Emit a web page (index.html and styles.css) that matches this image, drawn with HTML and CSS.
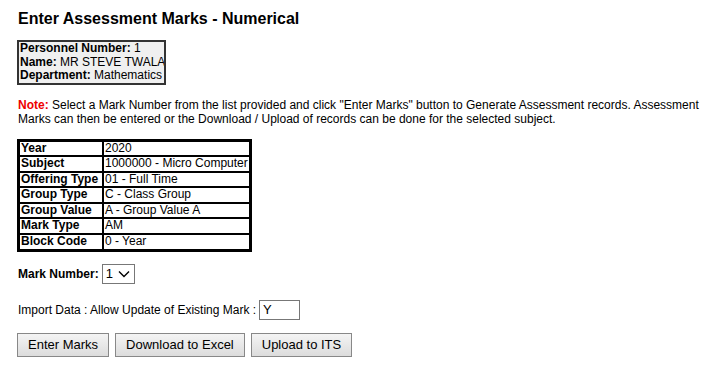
FILE: index.html
```html
<!DOCTYPE html>
<html>
<head>
<meta charset="utf-8">
<link rel="stylesheet" href="styles.css">
</head>
<body>
<div class="page">
  <h1 class="title">Enter Assessment Marks - Numerical</h1>
  <div class="person">
    <div><b>Personnel Number:</b> 1</div>
    <div><b>Name:</b> MR STEVE TWALA</div>
    <div><b>Department:</b> Mathematics</div>
  </div>
  <p class="note"><b class="note-label">Note:</b> Select a Mark Number from the list provided and click "Enter Marks" button to Generate Assessment records. Assessment Marks can then be entered or the Download / Upload of records can be done for the selected subject.</p>
  <table class="info">
    <tr><th>Year</th><td>2020</td></tr>
    <tr><th>Subject</th><td>1000000 - Micro Computer</td></tr>
    <tr><th>Offering Type</th><td>01 - Full Time</td></tr>
    <tr><th>Group Type</th><td>C - Class Group</td></tr>
    <tr><th>Group Value</th><td>A - Group Value A</td></tr>
    <tr><th>Mark Type</th><td>AM</td></tr>
    <tr><th>Block Code</th><td>0 - Year</td></tr>
  </table>
  <div class="row mark-row">
    <b>Mark Number:</b>
    <span class="select">1 <svg width="12" height="8" viewBox="0 0 12 8"><path d="M1 1.5 L6 6.5 L11 1.5" fill="none" stroke="#000" stroke-width="1.4"/></svg></span>
  </div>
  <div class="row import-row">
    <span>Import Data : Allow Update of Existing Mark :</span>
    <span class="input">Y</span>
  </div>
  <div class="buttons">
    <button class="btn">Enter Marks</button>
    <button class="btn">Download to Excel</button>
    <button class="btn">Upload to ITS</button>
  </div>
</div>
</body>
</html>
```
FILE: styles.css
```css
html, body {
  margin: 0;
  padding: 0;
  background: #fff;
}
body {
  font-family: "Liberation Sans", Arial, sans-serif;
  font-size: 12px;
  color: #000;
}
.page {
  padding: 10px 0 0 17px;
}
.title {
  font-size: 16px;
  font-weight: bold;
  margin: 0 0 0 1px;
  line-height: 18px;
}
.person {
  display: inline-block;
  margin-top: 12px;
  border: 2px solid #333;
  background: #f0f0f0;
  padding: 0 1px;
  line-height: 13.5px;
  width: 143px;
  white-space: nowrap;
  overflow: hidden;
}
.note {
  margin: 10px 0 0 1px;
  line-height: 14px;
  padding-right: 10px;
}
.note-label {
  color: #e00;
}
.info {
  margin-top: 13px;
  border: 2px solid #000;
  border-spacing: 0;
  line-height: 13.6px;
}
.info th, .info td {
  border: 1px solid #000;
  padding: 0 1px;
  text-align: left;
  white-space: nowrap;
}
.info th {
  width: 80px;
}
.info td {
  width: 143px;
}
.row {
  display: flex;
  align-items: center;
  gap: 3px;
  margin-left: 1px;
}
.mark-row {
  margin-top: 12px;
}
.select {
  display: inline-flex;
  align-items: center;
  gap: 5px;
  border: 1px solid #777;
  height: 18px;
  padding: 0 4px 0 3px;
  font-size: 13px;
}
.import-row {
  margin-top: 16px;
}
.input {
  display: inline-block;
  border: 1px solid #777;
  width: 36px;
  height: 18px;
  line-height: 18px;
  padding-left: 3px;
  font-size: 13px;
}
.buttons {
  display: flex;
  gap: 6px;
  margin-top: 13px;
}
.btn {
  font-family: "Liberation Sans", Arial, sans-serif;
  font-size: 13px;
  height: 24px;
  padding: 0 10px;
  border: 1px solid #888;
  border-radius: 0;
  background: linear-gradient(#f4f4f4, #dcdcdc);
  color: #000;
}
```
